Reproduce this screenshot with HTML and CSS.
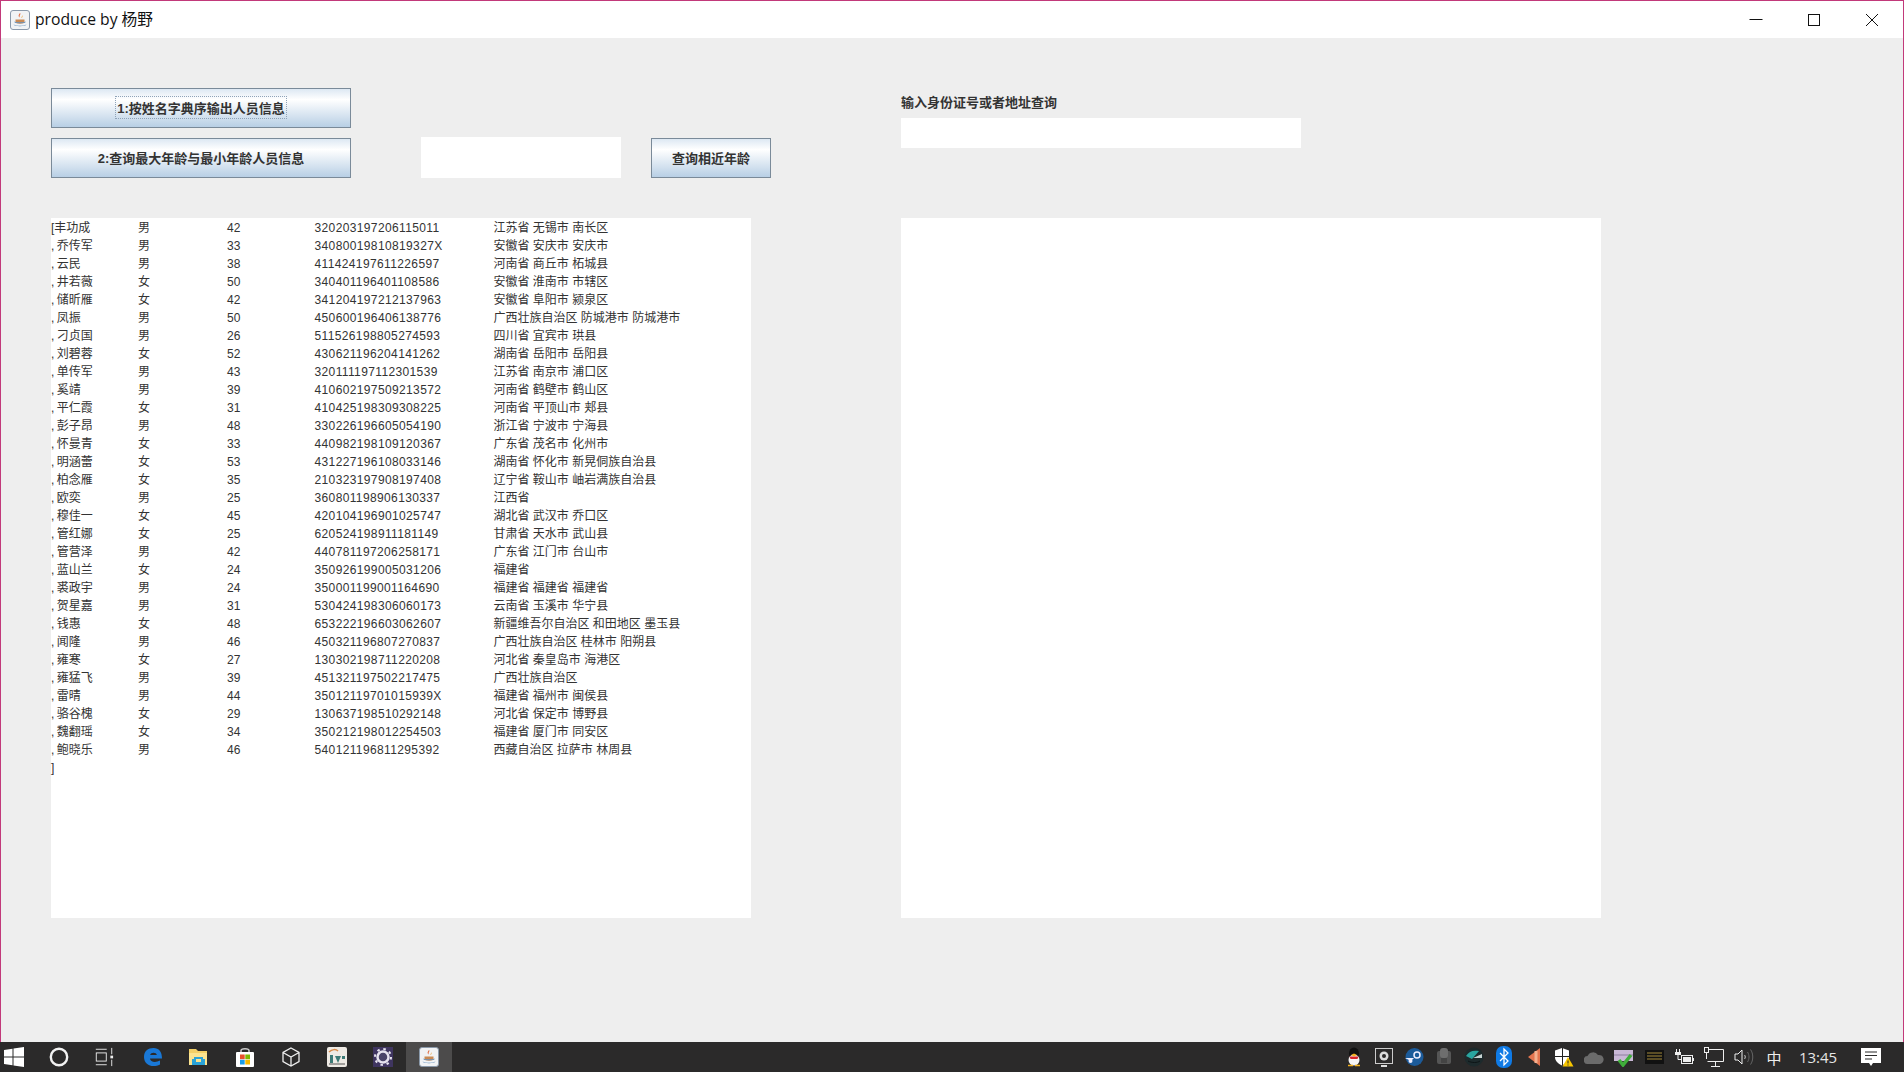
FILE: index.html
```html
<!DOCTYPE html>
<html lang="zh-CN">
<head>
    <meta charset="UTF-8">
    <title>produce by 杨野</title>
    <link rel="stylesheet" href="styles.css">
</head>
<body>
    <svg class="defs" width="0" height="0">
        <symbol id="javaIcon" viewBox="0 0 20 20">
            <rect x="0.5" y="0.5" width="19" height="19" rx="2.5" fill="#f1f3f5" stroke="#8a99aa"/>
            <path d="M10 3c1.5 1.500-1.500 2.500 0 4.500-2.500-1.500-1-3 0-4.500z" fill="#e0663a"/>
            <path d="M12 5c.5 1.500-1 2-.5 3 1-.5 1.500-1.800.5-3z" fill="#e9a23b"/>
            <path d="M5.500 9.500h9v2c0 1.500-1.800 2.200-4.500 2.200s-4.500-.7-4.500-2.200z" fill="#c98a55"/>
            <path d="M3.500 14.500c3 1.800 10 1.800 13 0-1 2.300-12 2.300-13 0z" fill="#4a7cb0"/>
            <path d="M4.500 12c0 1 11 1 11 0" fill="none" stroke="#6b93bb"/>
        </symbol>
    </svg>

    <div class="window">
        <div class="titlebar">
            <svg class="title-icon"><use href="#javaIcon"/></svg>
            <span class="title-text">produce by 杨野</span>
            <div class="win-btn">
                <svg width="14" height="14" viewBox="0 0 14 14"><path d="M0.500 6.500h13" stroke="#111" stroke-width="1"/></svg>
            </div>
            <div class="win-btn">
                <svg width="14" height="14" viewBox="0 0 14 14"><rect x="1.500" y="1.500" width="11" height="11" fill="none" stroke="#111"/></svg>
            </div>
            <div class="win-btn">
                <svg width="14" height="14" viewBox="0 0 14 14"><path d="M1 1l12 12M13 1L1 13" stroke="#111" fill="none"/></svg>
            </div>
        </div>

        <div class="main">
            <div class="left">
                <button class="btn btn-wide"><span class="focus">1:按姓名字典序输出人员信息</span></button>
                <div class="age-row">
                    <button class="btn btn-wide">2:查询最大年龄与最小年龄人员信息</button>
                    <input type="text" class="age-input">
                    <button class="btn btn-age">查询相近年龄</button>
                </div>
                <div class="list">
                    <div class="row"><span class="name">[丰功成</span><span>男</span><span>42</span><span>320203197206115011</span><span>江苏省 无锡市 南长区</span></div>
                    <div class="row"><span class="name">, 乔传军</span><span>男</span><span>33</span><span>34080019810819327X</span><span>安徽省 安庆市 安庆市</span></div>
                    <div class="row"><span class="name">, 云民</span><span>男</span><span>38</span><span>411424197611226597</span><span>河南省 商丘市 柘城县</span></div>
                    <div class="row"><span class="name">, 井若薇</span><span>女</span><span>50</span><span>340401196401108586</span><span>安徽省 淮南市 市辖区</span></div>
                    <div class="row"><span class="name">, 储昕雁</span><span>女</span><span>42</span><span>341204197212137963</span><span>安徽省 阜阳市 颍泉区</span></div>
                    <div class="row"><span class="name">, 凤振</span><span>男</span><span>50</span><span>450600196406138776</span><span>广西壮族自治区 防城港市 防城港市</span></div>
                    <div class="row"><span class="name">, 刁贞国</span><span>男</span><span>26</span><span>511526198805274593</span><span>四川省 宜宾市 珙县</span></div>
                    <div class="row"><span class="name">, 刘碧蓉</span><span>女</span><span>52</span><span>430621196204141262</span><span>湖南省 岳阳市 岳阳县</span></div>
                    <div class="row"><span class="name">, 单传军</span><span>男</span><span>43</span><span>320111197112301539</span><span>江苏省 南京市 浦口区</span></div>
                    <div class="row"><span class="name">, 奚靖</span><span>男</span><span>39</span><span>410602197509213572</span><span>河南省 鹤壁市 鹤山区</span></div>
                    <div class="row"><span class="name">, 平仁霞</span><span>女</span><span>31</span><span>410425198309308225</span><span>河南省 平顶山市 郏县</span></div>
                    <div class="row"><span class="name">, 彭子昂</span><span>男</span><span>48</span><span>330226196605054190</span><span>浙江省 宁波市 宁海县</span></div>
                    <div class="row"><span class="name">, 怀曼青</span><span>女</span><span>33</span><span>440982198109120367</span><span>广东省 茂名市 化州市</span></div>
                    <div class="row"><span class="name">, 明涵蕾</span><span>女</span><span>53</span><span>431227196108033146</span><span>湖南省 怀化市 新晃侗族自治县</span></div>
                    <div class="row"><span class="name">, 柏念雁</span><span>女</span><span>35</span><span>210323197908197408</span><span>辽宁省 鞍山市 岫岩满族自治县</span></div>
                    <div class="row"><span class="name">, 欧奕</span><span>男</span><span>25</span><span>360801198906130337</span><span>江西省</span></div>
                    <div class="row"><span class="name">, 穆佳一</span><span>女</span><span>45</span><span>420104196901025747</span><span>湖北省 武汉市 乔口区</span></div>
                    <div class="row"><span class="name">, 管红娜</span><span>女</span><span>25</span><span>620524198911181149</span><span>甘肃省 天水市 武山县</span></div>
                    <div class="row"><span class="name">, 管营泽</span><span>男</span><span>42</span><span>440781197206258171</span><span>广东省 江门市 台山市</span></div>
                    <div class="row"><span class="name">, 蓝山兰</span><span>女</span><span>24</span><span>350926199005031206</span><span>福建省</span></div>
                    <div class="row"><span class="name">, 裘政宇</span><span>男</span><span>24</span><span>350001199001164690</span><span>福建省 福建省 福建省</span></div>
                    <div class="row"><span class="name">, 贺星嘉</span><span>男</span><span>31</span><span>530424198306060173</span><span>云南省 玉溪市 华宁县</span></div>
                    <div class="row"><span class="name">, 钱惠</span><span>女</span><span>48</span><span>653222196603062607</span><span>新疆维吾尔自治区 和田地区 墨玉县</span></div>
                    <div class="row"><span class="name">, 闻隆</span><span>男</span><span>46</span><span>450321196807270837</span><span>广西壮族自治区 桂林市 阳朔县</span></div>
                    <div class="row"><span class="name">, 雍寒</span><span>女</span><span>27</span><span>130302198711220208</span><span>河北省 秦皇岛市 海港区</span></div>
                    <div class="row"><span class="name">, 雍猛飞</span><span>男</span><span>39</span><span>451321197502217475</span><span>广西壮族自治区</span></div>
                    <div class="row"><span class="name">, 雷晴</span><span>男</span><span>44</span><span>35012119701015939X</span><span>福建省 福州市 闽侯县</span></div>
                    <div class="row"><span class="name">, 骆谷槐</span><span>女</span><span>29</span><span>130637198510292148</span><span>河北省 保定市 博野县</span></div>
                    <div class="row"><span class="name">, 魏翻瑶</span><span>女</span><span>34</span><span>350212198012254503</span><span>福建省 厦门市 同安区</span></div>
                    <div class="row"><span class="name">, 鲍晓乐</span><span>男</span><span>46</span><span>540121196811295392</span><span>西藏自治区 拉萨市 林周县</span></div>
                    <div class="row"><span class="name">]</span></div>
                </div>
            </div>

            <div class="right">
                <div class="search-label">输入身份证号或者地址查询</div>
                <input type="text" class="search-input">
                <div class="result"></div>
            </div>
        </div>
    </div>

    <div class="taskbar">
        <div class="task-group">
            <svg class="task-icon" viewBox="0 0 20 20"><path d="M0 3l8.500-1.200V9.500H0zM9.500 1.600L20 0v9.500H9.500zM0 10.500h8.500v7.700L0 17zM9.500 10.500H20V20L9.500 18.400z" fill="#fff"/></svg>
            <svg class="task-icon" viewBox="0 0 20 20"><circle cx="10" cy="10" r="8.200" fill="none" stroke="#f2f2f2" stroke-width="2.400"/></svg>
            <svg class="task-icon" viewBox="0 0 22 20"><path d="M2 1.500h12M2 18.500h12" stroke="#eee"/><rect x="2.500" y="5.500" width="11" height="9" fill="none" stroke="#eee"/><path d="M19.500 0v7M19.500 13v7" stroke="#eee"/><rect x="18" y="8.500" width="3" height="3" fill="#eee"/></svg>
        </div>
        <div class="task-apps">
            <div class="task-slot">
                <svg class="app-icon" viewBox="0 0 20 20"><path d="M1 10C1 4 5 1 10.500 1 16 1 19 5 19 11.500H7c.2 3.500 5.500 4.500 10 2v4c-7 3.500-16 1-16-7.500zM7.200 8h6.600c-.2-3-6.200-3-6.600 0z" fill="#1a78d6"/></svg>
            </div>
            <div class="task-slot">
                <svg class="app-icon" viewBox="0 0 20 20"><path d="M0 2h7l2 2h9v14H0z" fill="#f3cf66"/><path d="M0 6h18v12H0z" fill="#fbe38f"/><path d="M5 10h9v2h2v6H3v-6h2z" fill="#2aa3d8"/><rect x="7" y="12" width="5" height="3" fill="#fbe38f"/></svg>
            </div>
            <div class="task-slot">
                <svg class="app-icon" viewBox="0 0 20 20"><path d="M6 5V3.500C6 1 14 1 14 3.500V5" fill="none" stroke="#ccc" stroke-width="1.500"/><rect x="1" y="5" width="18" height="15" rx="1" fill="#fff"/><rect x="5" y="7.500" width="4.700" height="4.700" fill="#e8502a"/><rect x="10.300" y="7.500" width="4.700" height="4.700" fill="#7fb900"/><rect x="5" y="12.800" width="4.700" height="4.700" fill="#1a9ce8"/><rect x="10.300" y="12.800" width="4.700" height="4.700" fill="#f6b800"/></svg>
            </div>
            <div class="task-slot">
                <svg class="app-icon" viewBox="0 0 20 20"><path d="M10 1l8 4.500v9L10 19l-8-4.500v-9zM2 5.500L10 10l8-4.500M10 10v9" fill="none" stroke="#eee" stroke-width="1.300"/></svg>
            </div>
            <div class="task-slot">
                <svg class="app-icon" viewBox="0 0 20 20"><rect width="20" height="20" rx="2" fill="#eeeae4"/><path d="M2 5c3-3 7-3 9-1" fill="none" stroke="#d88a4a" stroke-width="1.500"/><path d="M3 8h3v8H3zM8 9l3 7 3-7M15 9h3v3h-3z" fill="#3c7a76"/><path d="M2 17h16" stroke="#555"/></svg>
            </div>
            <div class="task-slot">
                <svg class="app-icon" viewBox="0 0 20 20"><rect width="20" height="20" fill="#3f3560"/><circle cx="10" cy="10" r="5.500" fill="#4a4468" stroke="#e6e3ee" stroke-width="2.500"/><circle cx="10" cy="10" r="8" fill="none" stroke="#e6e3ee" stroke-width="2" stroke-dasharray="2.500 3.800"/></svg>
            </div>
            <div class="task-slot active">
                <svg class="app-icon"><use href="#javaIcon"/></svg>
            </div>
        </div>
        <div class="tray">
            <div class="tray-slot">
                <svg width="16" height="22" viewBox="0 0 16 20"><ellipse cx="8" cy="6.500" rx="5" ry="6" fill="#111"/><ellipse cx="8" cy="13" rx="5.500" ry="5.500" fill="#f5f5f5"/><path d="M3.500 9.500h9l-1 2.500h-7z" fill="#d8232a"/><path d="M5 8l3-1.500L11 8 8 9.500z" fill="#f3b11c"/><path d="M2 18.500h5M9 18.500h5" stroke="#f3b11c" stroke-width="1.500"/></svg>
            </div>
            <div class="tray-slot">
                <svg width="18" height="19" viewBox="0 0 18 19"><rect x="0.500" y="0.500" width="17" height="15" fill="#2b2a2a" stroke="#ccc"/><circle cx="9" cy="8" r="4.500" fill="#ddd"/><circle cx="9" cy="8" r="2" fill="#2b2a2a"/><path d="M6 18h6" stroke="#ddd" stroke-width="2"/></svg>
            </div>
            <div class="tray-slot">
                <svg width="20" height="20" viewBox="0 0 20 20"><circle cx="10.500" cy="10" r="9" fill="#1c5b9a"/><circle cx="13" cy="8" r="3" fill="none" stroke="#eef" stroke-width="1.500"/><path d="M1 11l6 3 3-3" fill="#eef"/><circle cx="6.500" cy="14" r="2" fill="#eef"/></svg>
            </div>
            <div class="tray-slot">
                <svg width="18" height="20" viewBox="0 0 18 20"><rect x="2" y="4" width="14" height="13" rx="2" fill="#555"/><rect x="5" y="1" width="8" height="10" rx="3" fill="#6e6e6e"/><rect x="6" y="11" width="6" height="5" fill="#444"/></svg>
            </div>
            <div class="tray-slot">
                <svg width="20" height="20" viewBox="0 0 20 20"><circle cx="10" cy="10" r="9.500" fill="#1d2a2c"/><path d="M2 9c3-5 7-6 13-5L8 12z" fill="#2aa5a0"/><path d="M9 11l9-4v4z" fill="#c7d2d2"/><path d="M4 14c4 2 9 2 12 0" stroke="#0d1516" fill="none"/></svg>
            </div>
            <div class="tray-slot">
                <svg width="16" height="22" viewBox="0 0 16 22"><rect width="16" height="22" rx="7" fill="#0f7ae5"/><path d="M4 7l8 8-4 4V3l4 4-8 8" fill="none" stroke="#fff" stroke-width="1.300"/></svg>
            </div>
            <div class="tray-slot">
                <svg width="12" height="18" viewBox="0 0 12 18"><path d="M0 9L12 0v18z" fill="#e2744f"/><path d="M8 3v12" stroke="#f3b08f" stroke-width="3"/></svg>
            </div>
            <div class="tray-slot">
                <svg width="20" height="20" viewBox="0 0 20 20"><path d="M8 1l7 2.500V10c0 4-3 6.500-7 8.500C4 16.500 1 14 1 10V3.500z" fill="#fff"/><path d="M8 1v8H1v1h7v8.500h1V10h6V9H9V1z" fill="#222"/><path d="M14 10l5.500 9.500h-11z" fill="#f7c600"/><path d="M14 13.500v3M14 17.500v1" stroke="#222"/></svg>
            </div>
            <div class="tray-slot">
                <svg width="20" height="13" viewBox="0 0 20 13"><path d="M4 13a4 4 0 0 1-.5-8A6 6 0 0 1 14 4a4.500 4.500 0 0 1 2 9z" fill="#6b6b6b"/></svg>
            </div>
            <div class="tray-slot">
                <svg width="20" height="20" viewBox="0 0 20 20"><rect x="0" y="3" width="19" height="11" fill="#c9b8d6"/><path d="M0 8h19" stroke="#8e7fa0"/><path d="M5 13l4 5 8-10" fill="none" stroke="#3fae3a" stroke-width="3.500"/></svg>
            </div>
            <div class="tray-slot">
                <svg width="19" height="14" viewBox="0 0 19 14"><rect width="19" height="14" fill="#111"/><path d="M2 3h15M2 6h15M2 9h15" stroke="#a58a3a"/></svg>
            </div>
            <div class="tray-slot">
                <svg width="20" height="16" viewBox="0 0 20 16"><path d="M2.500 0v3M5.500 0v3" stroke="#eee"/><rect x="1" y="3" width="6" height="3" fill="#eee"/><path d="M4 6v4.500h3" fill="none" stroke="#eee"/><rect x="7.500" y="6.500" width="11" height="8" fill="#2b2a2a" stroke="#eee"/><rect x="9" y="8" width="8" height="5" fill="#eee"/><rect x="19" y="9" width="1" height="3" fill="#eee"/></svg>
            </div>
            <div class="tray-slot">
                <svg width="20" height="20" viewBox="0 0 20 20"><path d="M3.500 2.500H19.500V14.500H3.500" fill="none" stroke="#eee"/><rect x="0.500" y="0.500" width="4" height="5" fill="#2b2a2a" stroke="#eee"/><path d="M2.500 5.500V12M11.500 15v4M7 19.500h9" stroke="#eee"/></svg>
            </div>
            <div class="tray-slot">
                <svg width="20" height="18" viewBox="0 0 20 18"><path d="M1 6h3l4-4v14l-4-4H1z" fill="none" stroke="#eee"/><path d="M10.500 7c1 1 1 3 0 4" fill="none" stroke="#ccc"/><path d="M13.500 4c2 3 2 7 0 10M16.500 1.500c3 4 3 11 0 15" fill="none" stroke="#666"/></svg>
            </div>
            <div class="tray-slot ime">中</div>
            <div class="clock">13:45</div>
            <div class="notify">
                <svg width="20" height="20" viewBox="0 0 20 20"><path d="M0 1h20v15h-8l-2 3-2-3H0z" fill="#fff"/><path d="M4 5h12M4 8.500h12M4 12h7" stroke="#2b2a2a" stroke-width="1.200"/></svg>
            </div>
        </div>
    </div>
</body>
</html>
```

FILE: styles.css
```css
* {
    box-sizing: border-box;
}

html, body {
    height: 100%;
}

body {
    margin: 0;
    display: flex;
    flex-direction: column;
    overflow: hidden;
    font-family: "Liberation Sans", "Noto Sans CJK SC", sans-serif;
    color: #333;
}

.defs {
    display: block;
    height: 0;
}

.window {
    height: 1042px;
    display: flex;
    flex-direction: column;
    background-color: #eeeeee;
    border: 1px solid #c2397a;
    border-bottom: none;
}

.titlebar {
    height: 37px;
    flex-shrink: 0;
    display: flex;
    align-items: center;
    padding: 0 2px 0 9px;
    background-color: #fff;
    color: #111;
}

.title-icon {
    width: 20px;
    height: 20px;
}

.title-text {
    flex: 1;
    margin: -3px 0 0 5px;
    font-family: "Open Sans", "Noto Sans CJK SC", sans-serif;
    font-size: 15.700px;
}

.win-btn {
    width: 58px;
    height: 36px;
    display: flex;
    justify-content: center;
    align-items: center;
}

.main {
    display: flex;
    gap: 150px;
    padding: 50px 0 0 50px;
}

.left {
    width: 700px;
}

.btn {
    display: flex;
    justify-content: center;
    align-items: center;
    flex-shrink: 0;
    height: 40px;
    padding: 0 0 2px;
    font-family: inherit;
    font-size: 13px;
    font-weight: bold;
    color: #333;
    border: 1px solid #7a8a99;
    border-radius: 0;
    background: linear-gradient(#dde8f3 0%, #ffffff 28%, #b8cfe5 100%);
}

.btn-wide {
    width: 300px;
}

.btn-age {
    width: 120px;
    margin-left: 30px;
}

.focus {
    padding: 1px 1px;
    border: 1px dotted #8fa3b8;
}

.age-row {
    display: flex;
    align-items: flex-start;
    height: 40px;
    margin-top: 10px;
}

.age-input {
    flex-shrink: 0;
    width: 200px;
    height: 41px;
    margin: -1px 0 0 70px;
    border: none;
    background-color: #fff;
}

.list {
    width: 700px;
    height: 700px;
    margin-top: 40px;
    padding-top: 1px;
    background-color: #fff;
    font-size: 12px;
}

.row {
    display: grid;
    grid-template-columns: 87px 89px 87.500px 179px 1fr;
    height: 18px;
    line-height: 18px;
    white-space: pre;
}

.row span:nth-child(4) {
    letter-spacing: 0.37px;
}

.name {
    word-spacing: -1px;
}

.right {
    width: 700px;
    padding-top: 7px;
}

.search-label {
    height: 16px;
    line-height: 16px;
    font-size: 13px;
    font-weight: bold;
}

.search-input {
    display: block;
    width: 400px;
    height: 30px;
    margin-top: 7px;
    border: none;
    background-color: #fff;
}

.result {
    width: 700px;
    height: 700px;
    margin-top: 70px;
    background-color: #fff;
}

.taskbar {
    height: 30px;
    flex-shrink: 0;
    display: flex;
    align-items: center;
    background-color: #2b2a2a;
    color: #eee;
}

.task-group {
    width: 130px;
    display: flex;
    align-items: center;
    gap: 25px;
    padding-left: 4px;
}

.task-icon {
    width: 20px;
    height: 20px;
    flex-shrink: 0;
}

.task-apps {
    display: flex;
}

.task-slot {
    width: 46px;
    height: 30px;
    display: flex;
    justify-content: center;
    align-items: center;
}

.task-slot.active {
    background-color: #4c4b4b;
}

.app-icon {
    width: 20px;
    height: 20px;
}

.tray {
    flex: 1;
    display: flex;
    justify-content: flex-end;
    align-items: center;
    padding-right: 9px;
}

.tray-slot {
    width: 30px;
    height: 30px;
    display: flex;
    justify-content: center;
    align-items: center;
    flex-shrink: 0;
}

.ime {
    font-size: 15px;
}

.clock {
    width: 58px;
    text-align: center;
    font-family: "Open Sans", sans-serif;
    font-size: 15px;
    color: #e6e6e6;
}

.notify {
    width: 48px;
    height: 30px;
    display: flex;
    justify-content: center;
    align-items: center;
}
```
